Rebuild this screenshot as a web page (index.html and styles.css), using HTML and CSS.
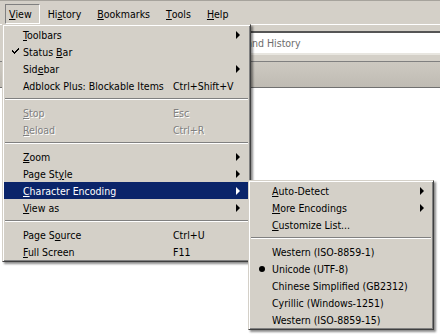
FILE: index.html
```html
<!DOCTYPE html>
<html lang="en">
<head>
    <meta charset="UTF-8">
    <meta name="viewport" content="width=device-width, initial-scale=1.0">
    <title>View Menu</title>
    <link rel="stylesheet" href="styles.css">
</head>
<body>
    <div class="window">
        <div class="menubar">
            <span class="menu-title pressed"><u>V</u>iew</span>
            <span class="menu-title">Hi<u>s</u>tory</span>
            <span class="menu-title"><u>B</u>ookmarks</span>
            <span class="menu-title"><u>T</u>ools</span>
            <span class="menu-title"><u>H</u>elp</span>
        </div>

        <div class="toolbar">
            <div class="searchbox">
                <span class="placeholder">Search Bookmarks and History</span>
            </div>
        </div>

        <div class="tabbar"></div>
        <div class="content"></div>
    </div>

    <!-- View menu -->
    <div class="menu view-menu">
        <div class="item"><span class="mark"></span><span class="label"><u>T</u>oolbars</span><span class="key"></span><span class="arrow"></span></div>
        <div class="item">
            <span class="mark">
                <svg width="7" height="7" viewBox="0 0 7 7"><path d="M0 2h1v1h1v1h1V3h1V2h1V1h1V0h1v2H6v1H5v1H4v1H3v1H2V5H1V4H0z" fill="#000"/></svg>
            </span>
            <span class="label">Status <u>B</u>ar</span><span class="key"></span><span></span>
        </div>
        <div class="item"><span class="mark"></span><span class="label">Sid<u>e</u>bar</span><span class="key"></span><span class="arrow"></span></div>
        <div class="item"><span class="mark"></span><span class="label">Adblock Plus: Blockable Items</span><span class="key">Ctrl+Shift+V</span><span></span></div>
        <div class="separator"></div>
        <div class="item disabled"><span class="mark"></span><span class="label"><u>S</u>top</span><span class="key">Esc</span><span></span></div>
        <div class="item disabled"><span class="mark"></span><span class="label"><u>R</u>eload</span><span class="key">Ctrl+R</span><span></span></div>
        <div class="separator"></div>
        <div class="item"><span class="mark"></span><span class="label"><u>Z</u>oom</span><span class="key"></span><span class="arrow"></span></div>
        <div class="item"><span class="mark"></span><span class="label">Page St<u>y</u>le</span><span class="key"></span><span class="arrow"></span></div>
        <div class="item active"><span class="mark"></span><span class="label"><u>C</u>haracter Encoding</span><span class="key"></span><span class="arrow"></span></div>
        <div class="item"><span class="mark"></span><span class="label"><u>V</u>iew as</span><span class="key"></span><span class="arrow"></span></div>
        <div class="separator"></div>
        <div class="item"><span class="mark"></span><span class="label">Page S<u>o</u>urce</span><span class="key">Ctrl+U</span><span></span></div>
        <div class="item"><span class="mark"></span><span class="label"><u>F</u>ull Screen</span><span class="key">F11</span><span></span></div>
    </div>

    <!-- Character Encoding submenu -->
    <div class="menu encoding-menu">
        <div class="item"><span class="mark"></span><span class="label"><u>A</u>uto-Detect</span><span class="arrow"></span></div>
        <div class="item"><span class="mark"></span><span class="label"><u>M</u>ore Encodings</span><span class="arrow"></span></div>
        <div class="item"><span class="mark"></span><span class="label"><u>C</u>ustomize List...</span><span></span></div>
        <div class="separator"></div>
        <div class="item"><span class="mark"></span><span class="label">Western (ISO-8859-1)</span><span></span></div>
        <div class="item"><span class="mark"><span class="bullet"></span></span><span class="label">Unicode (UTF-8)</span><span></span></div>
        <div class="item"><span class="mark"></span><span class="label">Chinese Simplified (GB2312)</span><span></span></div>
        <div class="item"><span class="mark"></span><span class="label">Cyrillic (Windows-1251)</span><span></span></div>
        <div class="item"><span class="mark"></span><span class="label">Western (ISO-8859-15)</span><span></span></div>
    </div>
</body>
</html>
```

FILE: styles.css
```css
body {
    margin: 0;
    padding: 0;
    width: 440px;
    height: 336px;
    overflow: hidden;
    background-color: #fff;
    font-family: "DejaVu Sans Condensed", "Liberation Sans", sans-serif;
    font-size: 10.5px;
    color: #000;
}

u {
    text-decoration: underline;
    text-underline-offset: 1px;
}

/* window chrome */

.menubar {
    display: flex;
    align-items: center;
    height: 23px;
    border-top: 1px solid #a6a39c;
    background-color: #d4d0c8;
    padding-left: 5px;
}

.menu-title {
    display: flex;
    align-items: center;
    height: 20px;
    padding: 0 8px;
    box-sizing: border-box;
    margin-top: 2px;
}

.menu-title.pressed {
    border: 1px solid;
    border-color: #808080 #fff #fff #808080;
    padding: 0 7px 0 3px;
}

.toolbar {
    border-top: 1px solid #fff;
    border-bottom: 1px solid #808080;
    background-color: #d4d0c8;
    padding: 6px 0 6px 4px;
}

.searchbox {
    height: 20px;
    display: flex;
    align-items: center;
    background-color: #fff;
    border-top: 2px solid #555;
    border-left: 2px solid #555;
    border-bottom: 2px solid #e8e6e0;
    padding-left: 149px;
}

.placeholder {
    color: #6d6d6d;
}

.tabbar {
    height: 25px;
    background: linear-gradient(#cdc9c1, #bfbbb3);
    border-bottom: 1px solid #707070;
}

/* menus */

.menu {
    position: absolute;
    display: flex;
    flex-direction: column;
    background-color: #d4d0c8;
    border: 1px solid;
    border-color: #d4d0c8 #404040 #404040 #d4d0c8;
    box-shadow: inset 1px 1px #fff, inset -1px -1px #808080, 2px 2px 2px rgba(0, 0, 0, 0.45);
    padding: 1px;
}

.view-menu {
    left: 2px;
    top: 24px;
    width: 245px;
}

.encoding-menu {
    left: 248px;
    top: 180px;
    width: 182px;
}

.item {
    display: grid;
    align-items: center;
    height: 17px;
    white-space: nowrap;
}

.view-menu .item {
    grid-template-columns: 19px 150px 63px 13px;
}

.encoding-menu .item {
    grid-template-columns: 22px 148px 12px;
}

.item.active {
    background-color: #0a246a;
    color: #fff;
}

.item.disabled {
    color: #808080;
    text-shadow: 1px 1px 0 #fff;
}

.mark {
    display: flex;
    align-items: center;
    justify-content: center;
}

.mark svg {
    display: block;
    margin-left: 4px;
}

.bullet {
    width: 6px;
    height: 6px;
    border-radius: 50%;
    background-color: #000;
    margin-left: 2px;
}

.arrow {
    width: 0;
    height: 0;
    border-top: 4px solid transparent;
    border-bottom: 4px solid transparent;
    border-left: 4px solid #000;
}

.active .arrow {
    border-left-color: #fff;
}

.separator {
    height: 10px;
    display: flex;
    align-items: center;
    padding: 0 1px;
}

.separator::before {
    content: "";
    flex: 1;
    border-top: 1px solid #808080;
    border-bottom: 1px solid #fff;
    height: 0;
}
```
